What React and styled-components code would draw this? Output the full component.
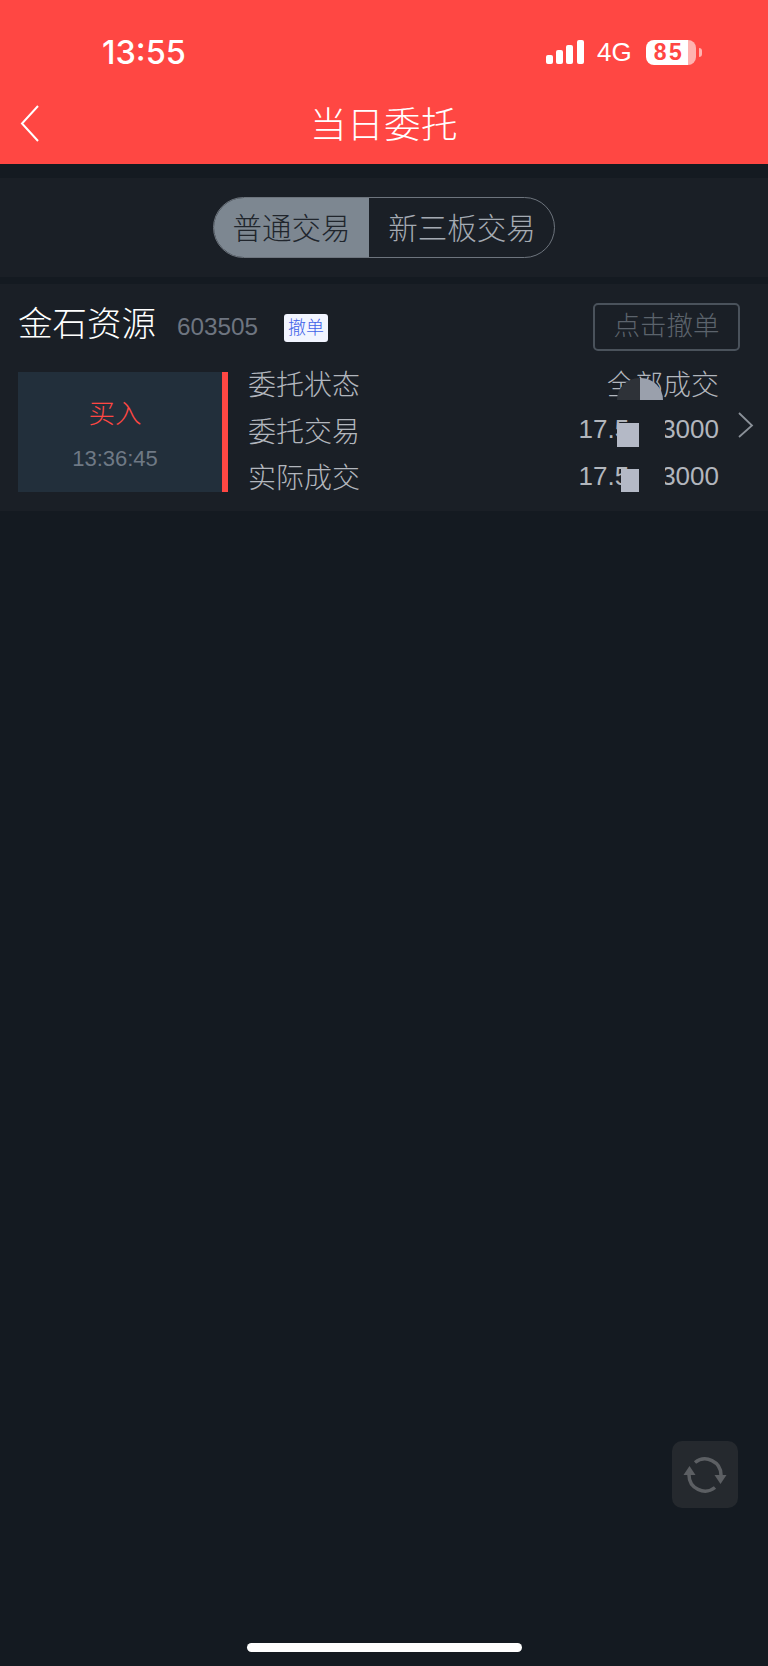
import React from "react";
import styled, { createGlobalStyle } from "styled-components";

const Global = createGlobalStyle`
  html, body { margin: 0; padding: 0; background: #141a21; }
  * { box-sizing: border-box; }
`;
const CJK = `"Liberation Sans", "Noto Sans CJK SC", sans-serif`;

const Page = styled.div`
  position: relative; width: 768px; height: 1666px; overflow: hidden;
  background: #141a21; font-family: ${CJK};
`;
const Header = styled.header`
  height: 164px; background: #ff4743; color: #fff; padding-top: 34px;
  display: flex; flex-direction: column;
`;
const StatusBar = styled.div`
  height: 38px; display: flex; align-items: center; justify-content: space-between;
  padding: 0 66px 0 102px;
`;
const Clock = styled.span`
  font-family: Inter, sans-serif; font-size: 32.5px; font-weight: 500; line-height: 38px;
`;
const StatusIcons = styled.div`display: flex; align-items: center; margin-top: -2px;`;
const Net = styled.span`
  font-size: 26px; line-height: 38px; margin: 0 13px 0 13px; width: 36px;
`;
const Battery = styled.div`
  width: 50px; height: 25px; border-radius: 8px;
  background: linear-gradient(90deg, #fff 0 42px, #ffb3b0 42px 100%);
  color: #ff4743; font-size: 23px; font-weight: 700; line-height: 25px; text-align: center;
  padding-right: 4px; letter-spacing: 2.500px;
`;
const BatteryNub = styled.div`
  width: 3px; height: 9px; margin-left: 3px; border-radius: 0 3px 3px 0; background: #ffb3b0;
`;
const NavBar = styled.div`
  flex: 1; position: relative; display: flex; align-items: flex-end; justify-content: center; padding-bottom: 13px;
`;
const BackIcon = styled.svg`position: absolute; left: 12px; top: 30px;`;
const Title = styled.h1`
  margin: 0; font-size: 36.5px; font-weight: 300; line-height: 50px; letter-spacing: 0.5px;
`;
const TabSection = styled.section`
  margin-top: 14px; height: 99px; background: #1a1f26; padding-top: 19px;
  display: flex; justify-content: center;
`;
const Segment = styled.div`
  width: 342px; height: 61px; display: flex; border: 1.5px solid #6d747d; border-radius: 31px; overflow: hidden;
`;
const Tab = styled.div`
  width: ${p => p.$w}px; display: flex; align-items: center; justify-content: center; padding-bottom: 3px;
  font-size: 29.5px; font-weight: 300;
  background: ${p => (p.$active ? "#7d8791" : "transparent")};
  color: ${p => (p.$active ? "#20252c" : "#a4aab2")};
  ${p => p.$active && "border-right: 2px solid #1a1f26;"}
`;
const Card = styled.section`
  position: relative; margin-top: 7px; height: 227px; background: #1a1f26;
  padding: 19px 49px 0 18px;
`;
const CardHead = styled.div`display: flex; align-items: center; height: 48px;`;
const StockName = styled.span`
  font-size: 34.5px; font-weight: 300; color: #fff; width: 159px; line-height: 48px; margin-bottom: 6px;
`;
const StockCode = styled.span`font-size: 24.300px; color: #6e7580; width: 107px;`;
const Tag = styled.span`
  width: 44px; height: 28px; margin-top: 2px; border-radius: 3px; background: #f2f5ff; color: #3f62e8;
  font-size: 18px; line-height: 28px; text-align: center; font-weight: 300;
`;
const CancelButton = styled.div`
  margin-left: auto; margin-right: -21px; width: 147px; height: 48px; border: 2px solid #4a525b; border-radius: 5px;
  color: #5c636c; font-size: 26.5px; font-weight: 300; line-height: 42px; text-align: center;
`;
const Body = styled.div`display: flex; margin-top: 21px; height: 120px;`;
const SideBox = styled.div`
  width: 210px; flex-shrink: 0; border-right: 6px solid #ff4743; background: #222f3b; padding: 25px 10px 0 0;
  display: flex; flex-direction: column; align-items: center;
`;
const Side = styled.span`color: #ff4743; font-size: 26.5px; line-height: 34px; font-weight: 300;`;
const Time = styled.span`color: #6f7985; font-size: 22px; line-height: 28px; margin-top: 14px;`;
const Rows = styled.div`
  flex: 1; margin-left: 20px; margin-top: -12px; display: flex; flex-direction: column;
`;
const Row = styled.div`
  height: 46.5px; flex-shrink: 0; display: flex; justify-content: space-between; align-items: center;
  color: #b2b6bd; font-size: 28px; font-weight: 300;
`;
const Num = styled.span`display: flex; font-size: 26px; font-weight: 400;`;
const NumGap = styled.span`width: 32px;`;
const Arrow = styled.svg`position: absolute; left: 736px; top: 127px;`;
const Patch = styled.div`
  position: absolute; left: ${p => p.$x}px; top: ${p => p.$y}px; width: ${p => p.$w}px; height: ${p => p.$h}px;
  background: ${p => p.$c};
`;
const Half = styled.div`
  position: absolute; top: 94px; left: ${p => p.$x}px; width: 23px; height: 22px; background: ${p => p.$c};
  border-radius: ${p => (p.$left ? "23px 0 0 0" : "0 23px 0 0")};
`;
const Refresh = styled.div`
  position: absolute; left: 672px; top: 1441px; width: 66px; height: 67px; border-radius: 10px; background: #25292e;
  display: flex; align-items: center; justify-content: center;
`;
const HomeBar = styled.div`
  position: absolute; left: 247px; top: 1643px; width: 275px; height: 9px; border-radius: 5px; background: #fff;
`;

export default function App() {
  return (
    <Page>
      <Global />
      <Header>
        <StatusBar>
          <Clock>13:55</Clock>
          <StatusIcons>
            <svg width="38" height="26" viewBox="0 0 38 26">
              <rect x="0" y="16" width="7" height="9" rx="2" fill="#fff" />
              <rect x="10" y="11" width="7" height="14" rx="2" fill="#fff" />
              <rect x="20" y="6" width="7" height="19" rx="2" fill="#fff" />
              <rect x="31" y="1" width="7" height="24" rx="2" fill="#fff" />
            </svg>
            <Net>4G</Net>
            <Battery>85</Battery>
            <BatteryNub />
          </StatusIcons>
        </StatusBar>
        <NavBar>
          <BackIcon width="30" height="44" viewBox="0 0 30 44" fill="none">
            <path d="M26 4L10 21.500L26 39" stroke="#fff" strokeWidth="2" />
          </BackIcon>
          <Title>当日委托</Title>
        </NavBar>
      </Header>
      <TabSection>
        <Segment>
          <Tab $active $w={157}>普通交易</Tab>
          <Tab $w={182}>新三板交易</Tab>
        </Segment>
      </TabSection>
      <Card>
        <CardHead>
          <StockName>金石资源</StockName>
          <StockCode>603505</StockCode>
          <Tag>撤单</Tag>
          <CancelButton>点击撤单</CancelButton>
        </CardHead>
        <Body>
          <SideBox>
            <Side>买入</Side>
            <Time>13:36:45</Time>
          </SideBox>
          <Rows>
            <Row><span>委托状态</span><span>全部成交</span></Row>
            <Row><span>委托交易</span><Num><span>17.5</span><NumGap /><span>3000</span></Num></Row>
            <Row><span>实际成交</span><Num><span>17.5</span><NumGap /><span>3000</span></Num></Row>
          </Rows>
        </Body>
        <Half $left $x={617} $c="#2e3238" />
        <Half $x={640} $c="#9aa0ac" />
        <Patch $x={617} $y={139} $w={22} $h={24} $c="#b4b9c6" />
        <Patch $x={639} $y={135} $w={26} $h={30} $c="#1a1f26" />
        <Patch $x={621} $y={185} $w={18} $h={23} $c="#b4b9c6" />
        <Patch $x={639} $y={181} $w={26} $h={30} $c="#1a1f26" />
        <Arrow width="18" height="28" viewBox="0 0 18 28" fill="none">
          <path d="M3 2L16 14.500L3 26" stroke="#8a9098" strokeWidth="1.800" />
        </Arrow>
      </Card>
      <Refresh>
        <svg width="44" height="42" viewBox="-1 0 44 42" fill="none">
          <path d="M5 21A16 16 0 0 0 31 33.500" stroke="#5c5f63" strokeWidth="3.500" />
          <path d="M37 21A16 16 0 0 0 11 8.500" stroke="#5c5f63" strokeWidth="3.500" />
          <path d="M5.500 12L-0.500 21H11.500Z" fill="#5c5f63" />
          <path d="M36.500 30L30.500 21H42.500Z" fill="#5c5f63" />
        </svg>
      </Refresh>
      <HomeBar />
    </Page>
  );
}
